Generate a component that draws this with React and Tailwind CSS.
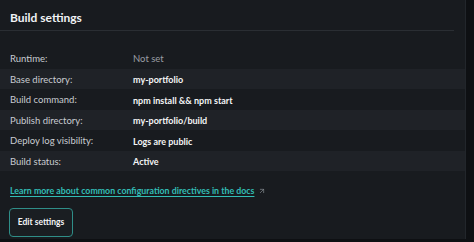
import { ArrowUpRight } from 'lucide-react';

const rows = [
    { label: 'Runtime:', value: 'Not set', muted: true },
    { label: 'Base directory:', value: 'my-portfolio' },
    { label: 'Build command:', value: 'npm install && npm start' },
    { label: 'Publish directory:', value: 'my-portfolio/build' },
    { label: 'Deploy log visibility:', value: 'Logs are public' },
    { label: 'Build status:', value: 'Active' },
];

export default function App() {
    return (
        <div className="w-[474px] h-[242px] bg-[#0e1013] flex font-['Lato',sans-serif] overflow-hidden">
            <div className="w-[466px] h-[239px] bg-[#181b1f] border-r border-[#22262b] flex flex-col">
                <div className="h-[31px] mr-[11px] border-b border-[#2a2e33] pl-[10px] flex items-center">
                    <h2 className="text-[12px] font-bold text-[#f1f3f5] leading-none pt-[5px]">Build settings</h2>
                </div>

                <div className="mt-[17px] flex flex-col">
                    {rows.map((row, i) => (
                        <div
                            key={row.label}
                            className={`h-[20.5px] pt-[2px] flex items-center ${i % 2 === 1 ? 'bg-[#1f2227]' : ''}`}
                        >
                            <span className="w-[133px] pl-[10px] shrink-0 text-[9.5px] text-[#c9ccd1]">{row.label}</span>
                            <span className={row.muted ? 'text-[9.5px] text-[#9a9ea4]' : 'text-[9px] font-bold text-[#f4f5f6]'}>{row.value}</span>
                        </div>
                    ))}
                </div>

                <div className="mt-[13px] pl-[10px] flex items-center gap-[4px]">
                    <a href="#" className="text-[8.8px] font-bold text-[#32bdb5] underline underline-offset-2">
                        Learn more about common configuration directives in the docs
                    </a>
                    <ArrowUpRight size={8} strokeWidth={2} className="text-[#8a8f95]" />
                </div>

                <div className="mt-[10px] pl-[9px]">
                    <button className="w-[64px] h-[29px] rounded-[4px] border border-[#2f8e88] bg-[#1a1e22] text-[8.5px] font-bold text-[#f4f5f6]">
                        Edit settings
                    </button>
                </div>
            </div>
        </div>
    );
}
